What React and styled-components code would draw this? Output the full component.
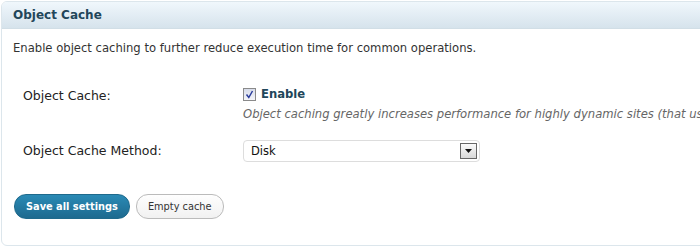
import React from 'react';
import styled, { createGlobalStyle } from 'styled-components';

const GlobalStyle = createGlobalStyle`
  html, body { margin: 0; padding: 0; background: #fff; }
  body { font-family: "DejaVu Sans", Verdana, sans-serif; overflow: hidden; }
`;

const Page = styled.div`
  width: 700px;
  height: 247px;
  padding: 1px 0 0 1px;
  box-sizing: border-box;
  overflow: hidden;
`;

const Postbox = styled.div`
  width: 720px;
  height: 245px;
  box-sizing: border-box;
  border: 1px solid #dce6ec;
  border-radius: 6px;
  overflow: hidden;
`;

const Header = styled.h3`
  margin: 0;
  height: 27px;
  box-sizing: border-box;
  padding: 0 11px;
  display: flex;
  align-items: center;
  background: linear-gradient(#f0f7fc, #d6e3ec);
  border-bottom: 1px solid #d1dee6;
  font-size: 12px;
  font-weight: bold;
  color: #22465a;
`;

const Inside = styled.div`
  padding: 12px 11px 0;
`;

const Intro = styled.p`
  margin: 0 0 32px;
  font-size: 11.6px;
  color: #333;
`;

const FormTable = styled.div`
  display: grid;
  grid-template-columns: 220px 1fr;
  row-gap: 19px;
  padding-left: 10px;
`;

const Label = styled.div`
  font-size: 12.5px;
  color: #222;
  padding-top: ${p => p.$top || 0}px;
`;

const Field = styled.div`
  display: flex;
  flex-direction: column;
  gap: 6px;
`;

const CheckRow = styled.label`
  display: flex;
  align-items: center;
  gap: 5px;
  font-size: 11.6px;
  font-weight: bold;
  color: #21465a;
`;

const Box = styled.span`
  width: 11px;
  height: 11px;
  border: 1px solid #8a8a8a;
  background: linear-gradient(#d7dcea, #f4f5f9);
  display: flex;
  align-items: center;
  justify-content: center;
`;

const Hint = styled.span`
  font-size: 11.6px;
  font-style: italic;
  color: #666;
  white-space: nowrap;
`;

const Select = styled.div`
  width: 237px;
  height: 22px;
  box-sizing: border-box;
  border: 1px solid #dddddd;
  border-radius: 4px;
  display: flex;
  align-items: center;
  justify-content: space-between;
  padding: 0 2px 0 7px;
  font-size: 11.5px;
  color: #111;
`;

const Arrow = styled.span`
  width: 15px;
  height: 14px;
  border: 1px solid #666;
  background: linear-gradient(#fafafa, #d8d8d8);
  display: flex;
  align-items: center;
  justify-content: center;
`;

const Actions = styled.div`
  display: flex;
  gap: 6px;
  margin-top: 32px;
  padding-left: 1px;
`;

const Button = styled.button`
  height: 25px;
  border-radius: 12px;
  padding: 0 11px;
  font-family: inherit;
  font-size: 9.8px;
  cursor: pointer;
  border: 1px solid ${p => (p.$primary ? '#1f6a8c' : '#bbb')};
  color: ${p => (p.$primary ? '#fff' : '#333')};
  font-weight: ${p => (p.$primary ? 'bold' : 'normal')};
  background: ${p =>
    p.$primary ? 'linear-gradient(#2a8ab5, #1e6a8f)' : 'linear-gradient(#fefefe, #f1f1f1)'};
`;

export default function App() {
  return (
    <>
      <GlobalStyle />
      <Page>
        <Postbox>
          <Header>Object Cache</Header>
          <Inside>
            <Intro>Enable object caching to further reduce execution time for common operations.</Intro>
            <FormTable>
              <Label $top={1}>Object Cache:</Label>
              <Field>
                <CheckRow>
                  <Box>
                    <svg width="9" height="9" viewBox="0 0 9 9">
                      <path d="M1.5 4.5 L3.8 7.5 L7.5 1" fill="none" stroke="#2b3d9c" strokeWidth="1.5" />
                    </svg>
                  </Box>
                  Enable
                </CheckRow>
                <Hint>Object caching greatly increases performance for highly dynamic sites (that use the Object Cache API).</Hint>
              </Field>
              <Label $top={3}>Object Cache Method:</Label>
              <Field>
                <Select>
                  Disk
                  <Arrow>
                    <svg width="7" height="4" viewBox="0 0 7 4">
                      <path d="M0 0 H7 L3.5 4 Z" fill="#111" />
                    </svg>
                  </Arrow>
                </Select>
              </Field>
            </FormTable>
            <Actions>
              <Button $primary>Save all settings</Button>
              <Button>Empty cache</Button>
            </Actions>
          </Inside>
        </Postbox>
      </Page>
    </>
  );
}
